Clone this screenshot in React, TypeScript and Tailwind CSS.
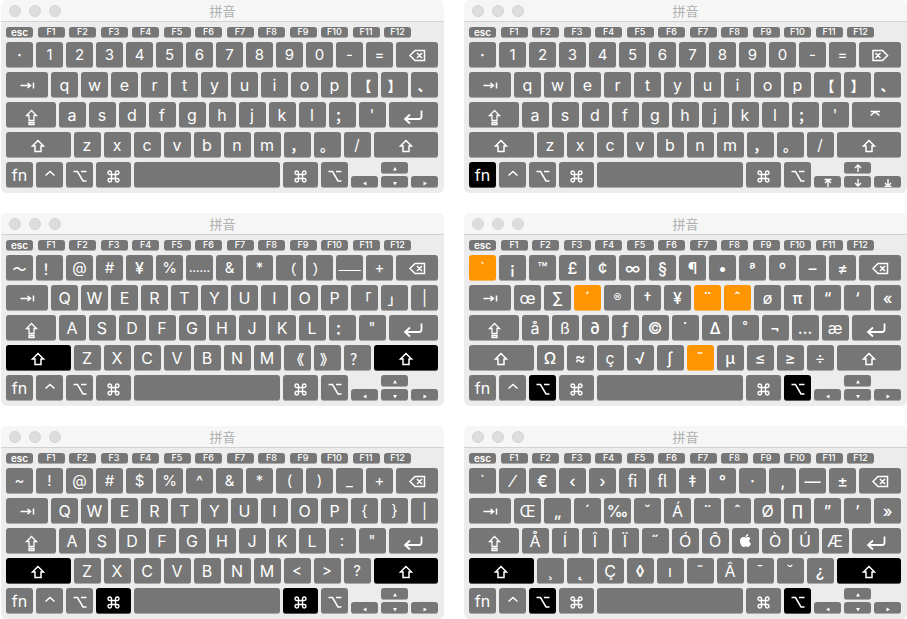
import type { ReactNode } from "react";
import { FaApple } from "react-icons/fa";

type IconName =
  | "tab" | "caps" | "shift" | "delete" | "forward" | "return" | "enter"
  | "control" | "option" | "command";

const ICON_PATHS: Record<IconName, string> = {
  tab: "M3.5 13.5H13 M10.5 11l3 2.5-3 2.5 M16.5 10.5v6",
  caps: "M10.5 8.5L5.5 13.5H8v5h5v-5h2.5z M8 20.5h5v2H8z",
  shift: "M10 8.5L4.5 14H7v5.5h6V14h2.5z",
  delete: "M3 13.5L8 8.5h9.5v10H8z M10 11l5 5 M15 11l-5 5",
  forward: "M17.5 13.5l-5-5H3v10h9.5z M5.5 11l5 5 M10.5 11l-5 5",
  return: "M18.5 8.5v6q0 2.5-2.5 2.5H2 M7 12.5L2 17l5 4.5",
  enter: "M4.5 9.5h9.5 M4.5 13.5L9 10l4.5 3.5",
  control: "M5.5 13.5L10 9.5l4.5 4",
  option: "M3.5 9.5h4l5.5 9.5h3.5 M11 9.5h5.5",
  command:
    "M7.5 12.5h4v4h-4z M7.5 12.5H5.75a1.75 1.75 0 1 1 1.75-1.75z M11.5 12.5v-1.75a1.75 1.75 0 1 1 1.75 1.75z M11.5 16.5h1.75a1.75 1.75 0 1 1-1.75 1.75z M7.5 16.5v1.75a1.75 1.75 0 1 1-1.75-1.75z",
};

const ICON_STROKES: Partial<Record<IconName, number>> = {
  caps: 1.3,
  command: 1.4,
  return: 1.8,
};

function Icon({ name }: { name: IconName }) {
  return (
    <svg width="20" height="25" viewBox="0 0 20 25" fill="none" stroke="currentColor" strokeWidth={ICON_STROKES[name] ?? 1.5} className="shrink-0" aria-hidden="true">
      <path d={ICON_PATHS[name]} />
    </svg>
  );
}

type Tone = "idle" | "pressed" | "dead";

const TONES: Record<Tone, string> = {
  idle: "bg-[#767676] border-[#a9a9a9]",
  pressed: "bg-black border-[#555555]",
  dead: "bg-[#ff9500] border-[#f5b55c]",
};

function Key({
  tone = "idle",
  size = "w-[27px]",
  text = "text-base",
  label,
  children,
}: {
  tone?: Tone;
  size?: string;
  text?: string;
  label?: string;
  children?: ReactNode;
}) {
  return (
    <button
      type="button"
      aria-label={label}
      className={`flex h-[26px] items-center justify-center overflow-hidden rounded-[3px] border-b leading-6 whitespace-nowrap text-white ${size} ${text} ${TONES[tone]}`}
    >
      {children}
    </button>
  );
}

function glyphText(char: string) {
  if (char === "……") return "text-[11px] font-semibold";
  if (char === "®") return "text-xs font-medium";
  if ("【】，。、；：《》".includes(char))
    return "text-sm font-bold font-['Noto_Sans_CJK_SC',sans-serif]";
  if ("！？（）「」～".includes(char) || char === "——")
    return "text-sm font-medium font-['Noto_Sans_CJK_SC',sans-serif]";
  if (/^[A-Za-z]$/.test(char)) return "text-base";
  if (/^[\x21-\x7e]$/.test(char)) return "text-[15px]";
  if (/^[\u00c0-\u0153ﬁﬂ]$/.test(char)) return "text-base";
  return "text-base font-medium";
}

function Glyph({ char, dead }: { char: string; dead: boolean }) {
  return (
    <Key
      tone={dead ? "dead" : "idle"}
      text={glyphText(char)}
      label={char === "apple" ? "Apple" : undefined}
    >
      {char === "apple" ? <FaApple size={15} /> : char}
    </Key>
  );
}

const GROW = "min-w-0 flex-1";

const TRIANGLES = {
  left: "M8 7.5l3.5-2v4z",
  up: "M10 5l2 3.5H8z",
  down: "M10 9.5L12 6H8z",
  right: "M12 7.5l-3.5-2v4z",
};

const PAGE_ARROWS = {
  left: "M6.5 3.5h7 M10 11V4 M7 7l3-3 3 3",
  up: "M10 10V3 M7 6l3-3 3 3",
  down: "M10 3v7 M7 7l3 3 3-3",
  right: "M6.5 10.5h7 M10 3v7 M7 7l3 3 3-3",
};

function ArrowKey({ dir, paging }: { dir: keyof typeof TRIANGLES; paging: boolean }) {
  return (
    <button
      type="button"
      aria-label={`Arrow ${dir}`}
      className="flex h-3 w-[27px] items-center justify-center rounded-[3px] border-b border-[#a9a9a9] bg-[#767676] text-white"
    >
      <svg width="20" height="11" viewBox="0 0 20 11" aria-hidden="true" fill="none">
        {paging ? (
          <path d={PAGE_ARROWS[dir]} stroke="currentColor" strokeWidth="1.4" />
        ) : (
          <path d={TRIANGLES[dir]} fill="currentColor" />
        )}
      </svg>
    </button>
  );
}

type Modifier = "fn" | "shift" | "option" | "command";

interface Layout {
  id: string;
  rows: [string, string, string, string];
  held: Modifier[];
  dead?: string[];
}

const LAYOUTS: Layout[] = [
  {
    id: "plain",
    rows: ["· 1 2 3 4 5 6 7 8 9 0 - =", "q w e r t y u i o p 【 】 、", "a s d f g h j k l ； '", "z x c v b n m ， 。 /"],
    held: [],
  },
  {
    id: "fn",
    rows: ["· 1 2 3 4 5 6 7 8 9 0 - =", "q w e r t y u i o p 【 】 、", "a s d f g h j k l ； '", "z x c v b n m ， 。 /"],
    held: ["fn"],
  },
  {
    id: "shift",
    rows: ["～ ！ @ # ¥ % …… & * （ ） —— +", "Q W E R T Y U I O P 「 」 |", "A S D F G H J K L ： \"", "Z X C V B N M 《 》 ？"],
    held: ["shift"],
  },
  {
    id: "option",
    rows: ["` ¡ ™ £ ¢ ∞ § ¶ • ª º – ≠", "œ ∑ ´ ® † ¥ ¨ ˆ ø π “ ‘ «", "å ß ∂ ƒ © ˙ ∆ ˚ ¬ … æ", "Ω ≈ ç √ ∫ ˜ µ ≤ ≥ ÷"],
    held: ["option"],
    dead: ["`", "´", "¨", "ˆ", "˜"],
  },
  {
    id: "shift-command",
    rows: ["~ ! @ # $ % ^ & * ( ) _ +", "Q W E R T Y U I O P { } |", "A S D F G H J K L : \"", "Z X C V B N M < > ?"],
    held: ["shift", "command"],
  },
  {
    id: "shift-option",
    rows: ["` ⁄ € ‹ › ﬁ ﬂ ‡ ° · ‚ — ±", "Œ „ ´ ‰ ˇ Á ¨ ˆ Ø ∏ ” ’ »", "Å Í Î Ï ˝ Ó Ô apple Ò Ú Æ", "¸ ˛ Ç ◊ ı ˜ Â ¯ ˘ ¿"],
    held: ["shift", "option"],
  },
];

const FUNCTION_KEYS = ["esc", "F1", "F2", "F3", "F4", "F5", "F6", "F7", "F8", "F9", "F10", "F11", "F12"];

function KeyboardWindow({ layout }: { layout: Layout }) {
  const { rows, held, dead = [] } = layout;
  const tone = (m: Modifier): Tone => (held.includes(m) ? "pressed" : "idle");
  const fn = held.includes("fn");
  const glyphs = (row: string) =>
    row.split(" ").map((c) => <Glyph key={c} char={c} dead={dead.includes(c)} />);

  return (
    <section className="overflow-hidden rounded-md bg-[#ececec]">
      <header className="grid h-[22px] grid-cols-3 items-center border-b border-[#d2d2d2] bg-[#f6f6f6] px-2">
        <div className="flex gap-2">
          {["Close", "Minimize", "Zoom"].map((name) => (
            <button key={name} type="button" aria-label={name} className="size-3 rounded-full border border-[#d4d4d4] bg-[#dddddd]" />
          ))}
        </div>
        <h2 className="text-center font-['Noto_Sans_CJK_SC',sans-serif] text-[13px] leading-5 text-[#b0b0b0]">拼音</h2>
      </header>
      <div className="flex flex-col gap-1 pt-[5px] pr-1.5 pb-[5px] pl-[5px]">
        <div className="mr-[27px] flex justify-between">
          {FUNCTION_KEYS.map((name) => (
            <button
              key={name}
              type="button"
              className={`flex h-[11px] w-[27px] items-center justify-center rounded-[3px] border-b border-[#a9a9a9] bg-[#767676] leading-3 text-white ${name === "esc" ? "text-[10px] font-semibold" : "text-[9px] font-medium"}`}
            >
              {name}
            </button>
          ))}
        </div>
        <div className="flex gap-[3px]">
          {glyphs(rows[0])}
          <Key size={GROW} label="Delete">
            <Icon name={fn ? "forward" : "delete"} />
          </Key>
        </div>
        <div className="flex gap-[3px]">
          <Key size={GROW} label="Tab"><Icon name="tab" /></Key>
          {glyphs(rows[1])}
        </div>
        <div className="flex gap-[3px]">
          <Key size={GROW} label="Caps lock"><Icon name="caps" /></Key>
          {glyphs(rows[2])}
          <Key size={GROW} label="Return"><Icon name={fn ? "enter" : "return"} /></Key>
        </div>
        <div className="flex gap-[3px]">
          <Key size={GROW} tone={tone("shift")} label="Left shift"><Icon name="shift" /></Key>
          {glyphs(rows[3])}
          <Key size={GROW} tone={tone("shift")} label="Right shift"><Icon name="shift" /></Key>
        </div>
        <div className="flex gap-[3px]">
          <Key tone={tone("fn")}>fn</Key>
          <Key label="Control"><Icon name="control" /></Key>
          <Key tone={tone("option")} label="Left option"><Icon name="option" /></Key>
          <Key tone={tone("command")} size="w-[35px]" label="Left command"><Icon name="command" /></Key>
          <Key size={GROW} label="Space" />
          <Key tone={tone("command")} size="w-[35px]" label="Right command"><Icon name="command" /></Key>
          <Key tone={tone("option")} label="Right option"><Icon name="option" /></Key>
          <div className="flex items-end gap-[3px]">
            <ArrowKey dir="left" paging={fn} />
            <div className="flex flex-col gap-0.5">
              <ArrowKey dir="up" paging={fn} />
              <ArrowKey dir="down" paging={fn} />
            </div>
            <ArrowKey dir="right" paging={fn} />
          </div>
        </div>
      </div>
    </section>
  );
}

export default function App() {
  return (
    <main className="grid grid-cols-2 gap-5 bg-white pl-px font-[Inter,'Noto_Sans_CJK_SC',sans-serif]">
      {LAYOUTS.map((layout) => (
        <KeyboardWindow key={layout.id} layout={layout} />
      ))}
    </main>
  );
}
